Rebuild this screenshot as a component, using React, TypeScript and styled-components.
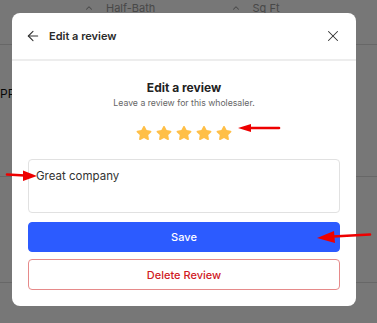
import React from 'react';
import styled, {createGlobalStyle} from 'styled-components';
import {ArrowLeft, X, ChevronUp} from 'lucide-react';
import {FaStar} from 'react-icons/fa';

const GlobalStyle = createGlobalStyle`
  html, body {
    margin: 0;
    padding: 0;
    background: #fff;
    font-family: Inter, "Noto Sans", sans-serif;
  }
  * {
    box-sizing: border-box;
  }
`;

const Page = styled.div`
  width: 377px;
  height: 323px;
  position: relative;
  overflow: hidden;
  background: #fff;
`;

// page behind the dialog
const FilterBar = styled.div`
  height: 45px;
  border-bottom: 1px solid #dcdcdc;
  display: flex;
  align-items: flex-start;
  padding: 1px 0 0 84px;
`;

const Filter = styled.div`
  width: 163px;
  display: flex;
  align-items: center;
  gap: 12px;
  font-size: 11px;
  color: #9a9a9a;
`;

const ListRow = styled.div`
  height: 132px;
  border-bottom: 1px solid #dcdcdc;
  padding-top: 41px;
  font-size: 12px;
  color: #111;
`;

const ListRowTall = styled.div`
  height: 106px;
  border-bottom: 1px solid #dcdcdc;
`;

const Overlay = styled.div`
  position: absolute;
  inset: 0;
  background: rgba(0, 0, 0, 0.533);
  display: flex;
  align-items: flex-start;
  padding: 13px 0 0 12px;
`;

const Modal = styled.div`
  width: 344px;
  background: #fff;
  border-radius: 8px;
  overflow: hidden;
`;

const ModalHeader = styled.div`
  height: 48px;
  display: flex;
  align-items: center;
  padding: 0 14px 0 13px;
  gap: 8px;
  border-bottom: 2px solid #ededed;
  color: #222;
`;

const HeaderTitle = styled.div`
  flex: 1;
  font-size: 11px;
  font-weight: 600;
  color: #2a2a2a;
`;

const IconBtn = styled.button`
  border: none;
  background: none;
  padding: 0;
  display: flex;
  color: #333;
  cursor: pointer;
`;

const Body = styled.div`
  padding: 19px 16px 16px;
  display: flex;
  flex-direction: column;
  align-items: center;
`;

const Heading = styled.h2`
  margin: 0;
  font-size: 12px;
  line-height: 16px;
  font-weight: 700;
  color: #222;
`;

const Sub = styled.p`
  margin: 1px 0 0;
  font-size: 8.7px;
  line-height: 12px;
  color: #666;
`;

const Stars = styled.div`
  display: flex;
  gap: 4px;
  margin-top: 16px;
  color: #ffbf47;
`;

const ReviewText = styled.textarea`
  margin-top: 18px;
  width: 100%;
  height: 54px;
  border: 1px solid #e1e1e1;
  border-radius: 4px;
  padding: 9px 7px;
  font-family: Inter, sans-serif;
  font-size: 11.5px;
  color: #333;
  resize: none;
  outline: none;
`;

interface IBtn {
  danger?: boolean;
}

const ActionBtn = styled.button<IBtn>`
  width: 100%;
  height: 30px;
  border-radius: 4px;
  font-family: Inter, sans-serif;
  font-size: 11px;
  font-weight: 500;
  cursor: pointer;
  margin-top: ${props => (props.danger ? 7 : 9)}px;
  background: ${props => (props.danger ? '#fff' : '#2c5bff')};
  color: ${props => (props.danger ? '#d0191f' : '#fff')};
  border: 1px solid ${props => (props.danger ? '#e68a8a' : '#2c5bff')};
  ${props => props.danger && 'height: 31px;'}
`;

// red marks drawn on top of the screenshot
const Marks = styled.svg`
  position: absolute;
  top: 0;
  left: 0;
  pointer-events: none;
`;

export default function App() {
  return (
    <>
      <GlobalStyle />
      <Page>
        <FilterBar>
          <Filter>
            <ChevronUp size={10} strokeWidth={2.5} />
            Half-Bath
          </Filter>
          <Filter>
            <ChevronUp size={10} strokeWidth={2.5} />
            Sq Ft
          </Filter>
        </FilterBar>
        <ListRow>PPROVED</ListRow>
        <ListRowTall />

        <Overlay>
          <Modal>
            <ModalHeader>
              <IconBtn><ArrowLeft size={16} strokeWidth={1.6} /></IconBtn>
              <HeaderTitle>Edit a review</HeaderTitle>
              <IconBtn><X size={18} strokeWidth={1.4} /></IconBtn>
            </ModalHeader>
            <Body>
              <Heading>Edit a review</Heading>
              <Sub>Leave a review for this wholesaler.</Sub>
              <Stars>
                {[1, 2, 3, 4, 5].map(n => <FaStar key={n} size={16} />)}
              </Stars>
              <ReviewText defaultValue="Great company" />
              <ActionBtn>Save</ActionBtn>
              <ActionBtn danger>Delete Review</ActionBtn>
            </Body>
          </Modal>
        </Overlay>

        <Marks width="377" height="323" viewBox="0 0 377 323">
          <g stroke="#ee0000" strokeWidth="2.6" strokeLinecap="round" fill="#ee0000">
            <line x1="279" y1="128" x2="249" y2="128" />
            <polygon points="238,128 251,124 251,132" stroke="none" />
            <line x1="7" y1="174.5" x2="25" y2="175.5" />
            <polygon points="37,176 23,170.5 23,181" stroke="none" />
            <line x1="370" y1="234.5" x2="333" y2="236.5" />
            <polygon points="317,238 334,231 335,243" stroke="none" />
          </g>
        </Marks>
      </Page>
    </>
  );
}
